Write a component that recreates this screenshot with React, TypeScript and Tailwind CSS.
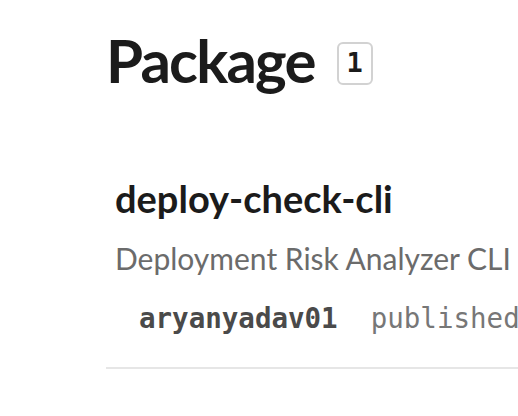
const App = () => {
  return (
    <div className="min-h-screen w-[518px] overflow-hidden bg-white font-['Lato','Noto_Sans',sans-serif]">
      <div className="pl-[106px] pt-[24px]">
        {/* Heading */}
        <div className="flex items-center">
          <h1 className="text-[60px] leading-[72px] font-bold tracking-[-1.8px] text-[#1b1b1b]">
            Package
          </h1>
          <span className="ml-[22px] mt-[6px] flex h-[43px] w-[36px] items-center justify-center rounded-[6px] border-2 border-[#d2d2d2] font-['DejaVu_Sans_Mono',monospace] text-[27px] font-bold text-[#1b1b1b]">
            1
          </span>
        </div>

        {/* Result */}
        <section className="mt-[80px] w-[600px] border-b-2 border-[#e6e6e6] pb-[31px]">
          <div className="pl-[9px]">
            <h3 className="text-[38px] leading-[44px] font-bold text-[#1b1b1b] whitespace-nowrap">
              deploy-check-cli
            </h3>
            <p className="mt-[18px] text-[30px] leading-[40px] text-[#6b6b6b] whitespace-nowrap">
              Deployment Risk Analyzer CLI - scans deployments for risk
            </p>
            <div className="mt-[22px] flex items-baseline whitespace-nowrap font-['DejaVu_Sans_Mono',monospace] text-[27.5px] leading-[36px]">
              <span className="pl-[24px] font-bold text-[#4a4a4a]">aryanyadav01</span>
              <span className="ml-[33px] text-[#777777]">published 1.0.0</span>
            </div>
          </div>
        </section>
      </div>
    </div>
  );
};

export default App;
